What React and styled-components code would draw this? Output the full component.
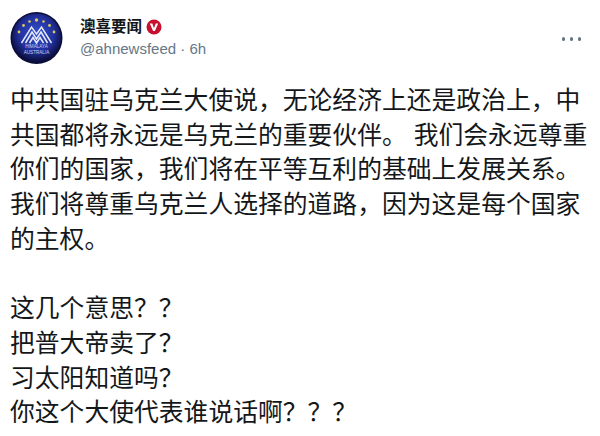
import React from 'react';
import styled, { createGlobalStyle } from 'styled-components';

const GlobalStyle = createGlobalStyle`
    html, body {
        margin: 0;
        background: #fff;
    }
`

const Card = styled.div`
    width: 600px;
    height: 436px;
    overflow: hidden;
    box-sizing: border-box;
    padding: 12px 0 0 10px;
    font-family: "Liberation Sans", "Noto Sans CJK SC", sans-serif;
    background: #fff;
`

const Header = styled.div`
    display: flex;
    align-items: flex-start;
    height: 56px;
`

const AvatarBox = styled.div`
    width: 53px;
    height: 52px;
    flex-shrink: 0;
`

const Names = styled.div`
    margin-left: 17px;
    padding-top: 5px;
    flex: 1;
`

const NameRow = styled.div`
    display: flex;
    align-items: center;
    gap: 4px;
    font-size: 15.5px;
    line-height: 20px;
    font-weight: 700;
    color: #14171a;
`

const Handle = styled.div`
    font-size: 15px;
    line-height: 18px;
    margin-top: 3px;
    color: #657786;
`

const More = styled.div`
    display: flex;
    gap: 4.5px;
    margin: 25px 19px 0 0;
`

const Dot = styled.span`
    width: 3.5px;
    height: 3.5px;
    border-radius: 50%;
    background: #657786;
`

const Body = styled.div`
    margin-top: 16px;
    width: 585px;
    font-size: 24.8px;
    line-height: 34.7px;
    color: #14171a;
`

const Line = styled.div`
    white-space: nowrap;
    min-height: 34.7px;
`

const Avatar = () => (
    <svg width="53" height="52" viewBox="0 0 52 52">
        <defs>
            <radialGradient id="bg" cx="50%" cy="42%" r="55%">
                <stop offset="0%" stopColor="#3350d0" />
                <stop offset="65%" stopColor="#22309c" />
                <stop offset="100%" stopColor="#0b0f40" />
            </radialGradient>
        </defs>
        <circle cx="26" cy="26" r="26" fill="#0a0d38" />
        <circle cx="26" cy="26" r="24.5" fill="url(#bg)" />
        <g fill="#d8c95a">
            <circle cx="8.5" cy="20" r="1.4" />
            <circle cx="13" cy="13.5" r="1.4" />
            <circle cx="19" cy="9.5" r="1.3" />
            <circle cx="26" cy="8" r="1.7" />
            <circle cx="33" cy="9.5" r="1.3" />
            <circle cx="39" cy="13.5" r="1.4" />
            <circle cx="43.5" cy="20" r="1.4" />
        </g>
        <g fill="none" stroke="#e6e8f4" strokeWidth="1.5">
            <path d="M11 31 L21 15 L26 22 L31 15 L41 31" />
            <path d="M15 31 L21.5 20 L26 27 L30.5 20 L37 31" />
            <path d="M19 31 L22.5 25.5 L26 31 L29.5 25.5 L33 31" />
        </g>
        <text x="26" y="36" textAnchor="middle" fontSize="4.6" fontFamily="Liberation Sans, sans-serif" fill="#c9cde8">HIMALAYA</text>
        <text x="26" y="42" textAnchor="middle" fontSize="4.6" fontFamily="Liberation Sans, sans-serif" fill="#c9cde8">AUSTRALIA</text>
    </svg>
)

const Badge = () => (
    <svg width="16" height="16" viewBox="0 0 16 16">
        <circle cx="8" cy="8" r="7.5" fill="#c8102e" />
        <path d="M3.8 4.6 L6.3 4.6 L8 9.2 L9.7 4.6 L12.2 4.6 L8.9 12 L7.1 12 Z" fill="#fff" />
    </svg>
)

const lines = [
    '中共国驻乌克兰大使说，无论经济上还是政治上，中',
    '共国都将永远是乌克兰的重要伙伴。 我们会永远尊重',
    '你们的国家，我们将在平等互利的基础上发展关系。',
    '我们将尊重乌克兰人选择的道路，因为这是每个国家',
    '的主权。',
    '',
    '这几个意思？？',
    '把普大帝卖了？',
    '习太阳知道吗？',
    '你这个大使代表谁说话啊？？？',
]

const App = () => {
    return (
        <Card>
            <GlobalStyle />
            <Header>
                <AvatarBox><Avatar /></AvatarBox>
                <Names>
                    <NameRow>澳喜要闻 <Badge /></NameRow>
                    <Handle>@ahnewsfeed · 6h</Handle>
                </Names>
                <More><Dot /><Dot /><Dot /></More>
            </Header>
            <Body>
                {lines.map((l, i) => <Line key={i}>{l}</Line>)}
            </Body>
        </Card>
    );
}

export default App;
